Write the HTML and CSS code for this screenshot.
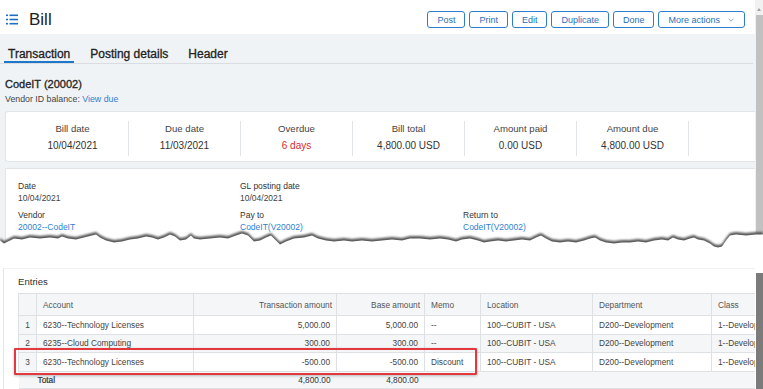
FILE: index.html
```html
<!DOCTYPE html>
<html lang="en">
<head>
    <meta charset="UTF-8">
    <meta name="viewport" content="width=device-width, initial-scale=1.0">
    <title>Bill</title>
    <link rel="stylesheet" href="styles.css">
</head>
<body>
    <div class="upper">
        <div class="app">
            <header class="topbar">
                <svg class="menu-icon" viewBox="0 0 12 11" width="12" height="11">
                    <rect x="0" y="0.5" width="2" height="1.6" />
                    <rect x="3.5" y="0.5" width="8.5" height="1.6" />
                    <rect x="0" y="4.7" width="2" height="1.6" />
                    <rect x="3.5" y="4.7" width="8.5" height="1.6" />
                    <rect x="0" y="8.9" width="2" height="1.6" />
                    <rect x="3.5" y="8.9" width="8.5" height="1.6" />
                </svg>
                <h1 class="title">Bill</h1>
                <div class="actions">
                    <button class="btn">Post</button>
                    <button class="btn">Print</button>
                    <button class="btn">Edit</button>
                    <button class="btn">Duplicate</button>
                    <button class="btn">Done</button>
                    <button class="btn btn-more">More actions
                        <svg class="chevron" viewBox="0 0 6 4" width="6" height="4">
                            <path d="M0.5 0.7 L3 3.2 L5.5 0.7" />
                        </svg>
                    </button>
                </div>
            </header>

            <nav class="tabs">
                <span class="tab active">Transaction</span>
                <span class="tab">Posting details</span>
                <span class="tab">Header</span>
            </nav>

            <section class="vendor">
                <h2 class="vendor-name">CodeIT (20002)</h2>
                <p class="vendor-balance">Vendor ID balance: <a href="#" class="link">View due</a></p>
            </section>

            <div class="summary">
                <div class="stat">
                    <div class="stat-label">Bill date</div>
                    <div class="stat-value">10/04/2021</div>
                </div>
                <div class="stat">
                    <div class="stat-label">Due date</div>
                    <div class="stat-value">11/03/2021</div>
                </div>
                <div class="stat">
                    <div class="stat-label">Overdue</div>
                    <div class="stat-value overdue">6 days</div>
                </div>
                <div class="stat">
                    <div class="stat-label">Bill total</div>
                    <div class="stat-value">4,800.00 USD</div>
                </div>
                <div class="stat">
                    <div class="stat-label">Amount paid</div>
                    <div class="stat-value">0.00 USD</div>
                </div>
                <div class="stat">
                    <div class="stat-label">Amount due</div>
                    <div class="stat-value">4,800.00 USD</div>
                </div>
            </div>

            <div class="details">
                <div class="field">
                    <div class="field-label">Date</div>
                    <div class="field-value">10/04/2021</div>
                </div>
                <div class="field">
                    <div class="field-label">GL posting date</div>
                    <div class="field-value">10/04/2021</div>
                </div>
                <div class="field"></div>
                <div class="field">
                    <div class="field-label">Vendor</div>
                    <div class="field-value"><a href="#" class="link">20002--CodeIT</a></div>
                </div>
                <div class="field">
                    <div class="field-label">Pay to</div>
                    <div class="field-value"><a href="#" class="link">CodeIT(V20002)</a></div>
                </div>
                <div class="field">
                    <div class="field-label">Return to</div>
                    <div class="field-value"><a href="#" class="link">CodeIT(V20002)</a></div>
                </div>
            </div>
        </div>

        <div class="scrollbar">
            <span class="scroll-arrow"></span>
            <span class="scroll-thumb"></span>
        </div>

        <!-- torn paper edge between the two cut-outs -->
        <svg class="tear" viewBox="0 0 763 26" width="763" height="26">
            <defs>
                <filter id="soft" x="-5%" y="-50%" width="110%" height="200%">
                    <feGaussianBlur stdDeviation="1.1" />
                </filter>
            </defs>
            <path id="edge" class="tear-shadow" filter="url(#soft)" d="M0 12 L4 15 L8 13 L14 10 L22 11 L30 9 L40 10 L50 9 L58 10 L62 8 L68 10 L76 11 L84 9 L92 7 L96 6 L100 9 L106 12 L114 14 L122 13 L130 11 L138 10 L146 8 L152 9 L158 11 L164 9 L170 6 L175 8 L180 12 L186 11 L191 7 L194 10 L200 11 L210 10 L220 9 L228 10 L236 7 L242 5 L248 7 L254 13 L260 12 L266 9 L271 7 L276 12 L280 16 L286 13 L294 10 L304 9 L312 7 L318 10 L326 12 L334 13 L344 12 L352 13 L362 12 L372 13 L382 12 L392 11 L402 12 L410 10 L420 10 L430 11 L440 10 L448 11 L456 13 L462 11 L470 10 L478 12 L484 14 L490 13 L498 12 L506 13 L514 12 L522 11 L530 12 L536 9 L541 7 L546 10 L552 13 L560 14 L568 13 L576 14 L584 12 L590 10 L595 9 L600 12 L606 14 L614 15 L622 14 L630 14 L638 13 L646 14 L654 12 L662 11 L668 12 L673 9 L678 11 L684 12 L690 10 L694 9 L698 11 L704 12 L710 15 L714 18 L718 19 L722 18 L726 12 L730 7 L736 6 L746 7 L756 6 L763 6 L763 26 L0 26 Z" />
            <path class="tear-paper" transform="translate(0 2.5)" d="M0 12 L4 15 L8 13 L14 10 L22 11 L30 9 L40 10 L50 9 L58 10 L62 8 L68 10 L76 11 L84 9 L92 7 L96 6 L100 9 L106 12 L114 14 L122 13 L130 11 L138 10 L146 8 L152 9 L158 11 L164 9 L170 6 L175 8 L180 12 L186 11 L191 7 L194 10 L200 11 L210 10 L220 9 L228 10 L236 7 L242 5 L248 7 L254 13 L260 12 L266 9 L271 7 L276 12 L280 16 L286 13 L294 10 L304 9 L312 7 L318 10 L326 12 L334 13 L344 12 L352 13 L362 12 L372 13 L382 12 L392 11 L402 12 L410 10 L420 10 L430 11 L440 10 L448 11 L456 13 L462 11 L470 10 L478 12 L484 14 L490 13 L498 12 L506 13 L514 12 L522 11 L530 12 L536 9 L541 7 L546 10 L552 13 L560 14 L568 13 L576 14 L584 12 L590 10 L595 9 L600 12 L606 14 L614 15 L622 14 L630 14 L638 13 L646 14 L654 12 L662 11 L668 12 L673 9 L678 11 L684 12 L690 10 L694 9 L698 11 L704 12 L710 15 L714 18 L718 19 L722 18 L726 12 L730 7 L736 6 L746 7 L756 6 L763 6 L763 26 L0 26 Z" />
        </svg>
    </div>

    <div class="lower">
        <div class="lower-main">
            <div class="entries">
                <h2 class="entries-title">Entries</h2>
                <div class="table-wrap">
                    <table class="entries-table">
                        <colgroup>
                            <col style="width: 18px">
                            <col style="width: 157px">
                            <col style="width: 143px">
                            <col style="width: 88px">
                            <col style="width: 56px">
                            <col style="width: 112px">
                            <col style="width: 119px">
                            <col style="width: 80px">
                        </colgroup>
                        <thead>
                            <tr>
                                <th class="num"></th>
                                <th>Account</th>
                                <th class="amount">Transaction amount</th>
                                <th class="amount">Base amount</th>
                                <th>Memo</th>
                                <th>Location</th>
                                <th>Department</th>
                                <th>Class</th>
                            </tr>
                        </thead>
                        <tbody>
                            <tr>
                                <td class="num">1</td>
                                <td>6230--Technology Licenses</td>
                                <td class="amount">5,000.00</td>
                                <td class="amount">5,000.00</td>
                                <td>--</td>
                                <td>100--CUBIT - USA</td>
                                <td>D200--Development</td>
                                <td>1--Development</td>
                            </tr>
                            <tr class="striped">
                                <td class="num">2</td>
                                <td>6235--Cloud Computing</td>
                                <td class="amount">300.00</td>
                                <td class="amount">300.00</td>
                                <td>--</td>
                                <td>100--CUBIT - USA</td>
                                <td>D200--Development</td>
                                <td>1--Development</td>
                            </tr>
                            <tr>
                                <td class="num">3</td>
                                <td>6230--Technology Licenses</td>
                                <td class="amount">-500.00</td>
                                <td class="amount">-500.00</td>
                                <td>Discount</td>
                                <td>100--CUBIT - USA</td>
                                <td>D200--Development</td>
                                <td>1--Development</td>
                            </tr>
                            <tr class="total">
                                <td class="num"></td>
                                <td class="total-label">Total</td>
                                <td class="amount">4,800.00</td>
                                <td class="amount">4,800.00</td>
                                <td></td>
                                <td></td>
                                <td></td>
                                <td></td>
                            </tr>
                        </tbody>
                    </table>
                    <div class="highlight"></div>
                </div>
            </div>
        </div>
        <div class="lower-scroll"><span></span></div>
    </div>
</body>
</html>
```

FILE: styles.css
```css
* {
    box-sizing: border-box;
}

body {
    margin: 0;
    width: 763px;
    height: 389px;
    overflow: hidden;
    font-family: "Liberation Sans", Arial, sans-serif;
    color: #333;
    background: #fff;
}

.link {
    color: #2f7fd0;
    text-decoration: none;
}

/* ---------- upper cut-out ---------- */

.upper {
    position: relative;
    display: flex;
    height: 252px;
    overflow: hidden;
}

.app {
    width: 755px;
    background: #f0f3f5;
    overflow: hidden;
}

.scrollbar {
    width: 8px;
    display: flex;
    flex-direction: column;
    background: #f1f1f1;
}

.scroll-arrow {
    height: 15px;
}

.scroll-arrow::before {
    content: '';
    display: block;
    width: 0;
    margin: 8px auto 0;
    border-left: 2.5px solid transparent;
    border-right: 2.5px solid transparent;
    border-bottom: 3px solid #a3a3a3;
}

.scroll-thumb {
    flex: 1;
    margin-left: 1px;
    background: #c1c1c1;
}

.topbar {
    display: flex;
    align-items: center;
    height: 34px;
    padding: 5px 10px 0 6px;
    background: #fff;
}

.menu-icon {
    fill: #1d6fc4;
    margin-right: 11px;
    flex-shrink: 0;
}

.title {
    margin: 0;
    font-size: 17px;
    line-height: 20px;
    font-weight: normal;
    color: #222;
}

.actions {
    display: flex;
    gap: 4px;
    margin-left: auto;
}

.btn {
    height: 17px;
    padding: 0 9px;
    border: 1.5px solid #2c7dd0;
    border-radius: 3px;
    background: #fff;
    color: #2a6fb8;
    font-family: "Liberation Sans", Arial, sans-serif;
    font-size: 9px;
    line-height: 14px;
    display: flex;
    align-items: center;
}

.btn-more {
    padding-right: 10px;
}

.chevron {
    margin-left: 8px;
    fill: none;
    stroke: #8aa6c4;
    stroke-width: 1;
}

.tabs {
    display: flex;
    gap: 12px;
    padding: 13px 0 0 4px;
    margin-right: 2px;
    border-bottom: 1px solid #d9dde1;
}

.tab {
    padding: 0 4px;
    font-size: 12px;
    line-height: 14px;
    color: #222;
    -webkit-text-stroke: 0.3px #222;
    border-bottom: 2px solid transparent;
}

.tab.active {
    border-bottom-color: #1f77c8;
}

.vendor {
    padding: 13px 5px 0;
}

.vendor-name {
    margin: 0;
    font-size: 11px;
    line-height: 14px;
    font-weight: normal;
    color: #222;
    -webkit-text-stroke: 0.3px #222;
}

.vendor-balance {
    margin: 2px 0 0;
    font-size: 8.8px;
    line-height: 12px;
    color: #444;
}

.summary {
    display: flex;
    margin: 6px 0 0 5px;
    padding: 9px 0 5px 11px;
    background: #fff;
    border: 1px solid #e2e5e8;
    border-right: 0;
    border-radius: 3px 0 0 3px;
}

.stat {
    width: 112px;
    padding: 1px 0 4px;
    text-align: center;
    border-right: 1px solid #e1e4e6;
}

.stat-label {
    font-size: 9.6px;
    line-height: 13px;
    color: #444;
}

.stat-value {
    margin-top: 4px;
    font-size: 10px;
    line-height: 13px;
    color: #333;
}

.stat-value.overdue {
    color: #d2282e;
}

.details {
    display: grid;
    grid-template-columns: 222px 223px 1fr;
    row-gap: 5px;
    align-content: start;
    min-height: 120px;
    margin: 6px 0 0 5px;
    padding: 11px 0 0 12px;
    background: #fff;
    border: 1px solid #e2e5e8;
    border-right: 0;
}

.field-label,
.field-value {
    font-size: 8.5px;
    line-height: 12px;
}

.field-label {
    color: #333;
}

.field-value {
    color: #444;
}

.tear {
    position: absolute;
    left: 0;
    top: 226px;
}

.tear-shadow {
    fill: #555;
}

.tear-paper {
    fill: #fff;
}

/* ---------- lower cut-out ---------- */

.lower {
    display: flex;
    height: 137px;
    background: #fff;
}

.lower-main {
    flex: 1;
    overflow: hidden;
    padding-top: 16px;
}

.entries {
    margin-left: 3px;
    padding: 7px 0 0 14px;
    border-left: 1px solid #e4e7e9;
    border-top: 1px solid #f0f2f3;
}

.entries-title {
    margin: 0 0 5px;
    font-size: 9.6px;
    line-height: 12px;
    font-weight: normal;
    color: #333;
}

.table-wrap {
    position: relative;
}

.entries-table {
    width: 773px;
    table-layout: fixed;
    border-collapse: collapse;
    font-size: 8.3px;
    color: #444;
}

.entries-table th,
.entries-table td {
    padding: 0 6px;
    border: 1px solid #dde1e4;
    text-align: left;
    white-space: nowrap;
    overflow: hidden;
}

.entries-table th {
    height: 22px;
    background: #f4f6f7;
    font-weight: normal;
    color: #555;
}

.entries-table td {
    height: 18.5px;
}

.entries-table .num {
    padding: 0;
    text-align: center;
    background: #f4f6f7;
}

.entries-table .amount {
    text-align: right;
}

.entries-table th.amount {
    padding-right: 4px;
}

.entries-table .striped td {
    background: #f4f6f7;
}

.entries-table .total td {
    height: 17px;
    border-left: 0;
    border-right: 0;
    background: #f4f6f7;
    color: #333;
}

.entries-table .total-label {
    padding-left: 1px;
    -webkit-text-stroke: 0.2px #333;
}

.highlight {
    position: absolute;
    left: -4px;
    top: 55px;
    width: 463px;
    height: 27px;
    border: 2px solid #e2383e;
    border-radius: 1px;
    box-shadow: 0 1px 3px rgba(0, 0, 0, 0.25);
}

.lower-scroll {
    width: 8px;
    padding-top: 21px;
}

.lower-scroll span {
    display: block;
    height: 100%;
    margin-left: 1px;
    background: #7b7b7b;
}
```
